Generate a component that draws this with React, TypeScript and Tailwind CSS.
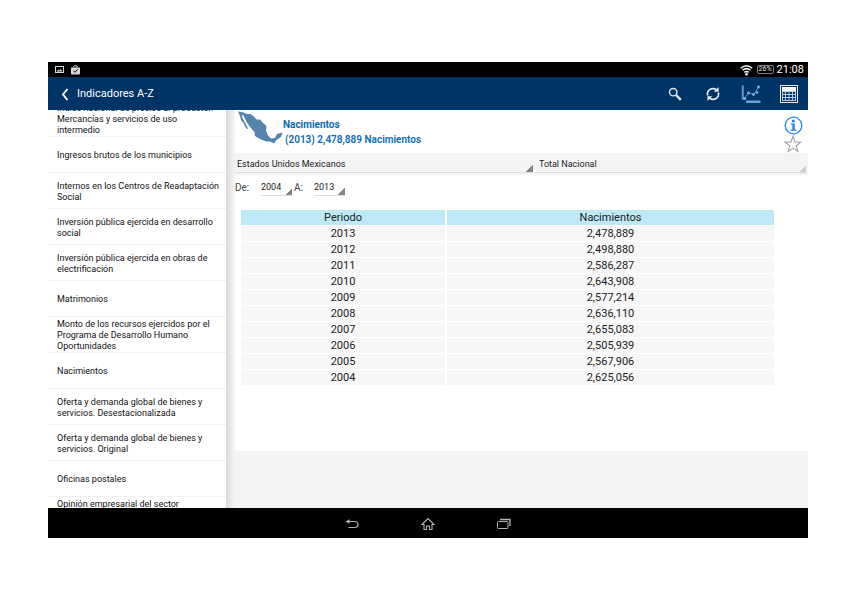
import type { ReactNode } from 'react';

const indicators = [
  'Índice nacional de precios al productor. Mercancías y servicios de uso intermedio',
  'Ingresos brutos de los municipios',
  'Internos en los Centros de Readaptación Social',
  'Inversión pública ejercida en desarrollo social',
  'Inversión pública ejercida en obras de electrificación',
  'Matrimonios',
  'Monto de los recursos ejercidos por el Programa de Desarrollo Humano Oportunidades',
  'Nacimientos',
  'Oferta y demanda global de bienes y servicios. Desestacionalizada',
  'Oferta y demanda global de bienes y servicios. Original',
  'Oficinas postales',
  'Opinión empresarial del sector manufacturero. Indicador agregado de tendencia',
];

const births: [string, string][] = [
  ['2013', '2,478,889'],
  ['2012', '2,498,880'],
  ['2011', '2,586,287'],
  ['2010', '2,643,908'],
  ['2009', '2,577,214'],
  ['2008', '2,636,110'],
  ['2007', '2,655,083'],
  ['2006', '2,505,939'],
  ['2005', '2,567,906'],
  ['2004', '2,625,056'],
];

const years = births.map(([year]) => year);

function StatusBar() {
  return (
    <div className="flex h-[15px] shrink-0 items-center bg-black px-1 text-[#d8d8d8]">
      <svg className="ml-[3px] h-[9px] w-[9px]" viewBox="0 0 9 9" aria-hidden="true">
        <rect x="0.5" y="1.5" width="8" height="6" fill="none" stroke="currentColor" />
        <path d="M1.500 6.500L3 4.600L4.300 5.600L5.800 4L7.500 6.500Z" fill="currentColor" />
      </svg>
      <svg className="ml-[7px] h-[10px] w-[9px]" viewBox="0 0 9 10" aria-hidden="true">
        <path d="M0 2.5h9v6q0 1-1 1H1q-1 0-1-1z" fill="currentColor" />
        <path d="M2.8 2.5V1.6q0-.8.8-.8h1.8q.8 0 .8.8v.9" fill="none" stroke="currentColor" />
        <path d="M2.5 5.8l1.5 1.5 2.8-3" fill="none" stroke="#000" />
      </svg>
      <span className="flex-1" />
      <svg className="h-[12px] w-[13px]" viewBox="0 0 13 12" aria-hidden="true">
        <g fill="none" stroke="#fff" strokeWidth="1.5">
          <path d="M0.8 4.2Q6.500-0.600 12.200 4.2" />
          <path d="M2.600 6.300Q6.500 3 10.400 6.300" />
          <path d="M4.400 8.300Q6.500 6.600 8.600 8.300" />
        </g>
        <circle cx="6.500" cy="10.200" r="1.300" fill="#fff" />
      </svg>
      <span className="ml-1 flex h-[9px] w-[17px] items-center justify-center rounded-xs border border-[#7c7c7c] text-[7px] leading-none text-[#e8e8e8]">
        26%
      </span>
      <span className="ml-[3px] text-[11px] leading-none text-white">21:08</span>
    </div>
  );
}

function BarButton({ label, children }: { label: string; children: ReactNode }) {
  return (
    <button type="button" aria-label={label} className="flex h-full w-[38px] items-center justify-center">
      {children}
    </button>
  );
}

function AppBar() {
  return (
    <header className="flex h-[33px] shrink-0 items-center bg-[#003366] text-white">
      <button type="button" className="flex h-full items-center gap-2 pt-[2px] pl-[13px] text-[11px]">
        <svg className="h-[13px] w-[8px]" viewBox="0 0 8 13" aria-hidden="true">
          <path d="M6.500 1L2 6.500L6.500 12" fill="none" stroke="currentColor" strokeWidth="1.900" />
        </svg>
        Indicadores A-Z
      </button>
      <span className="flex-1" />
      <BarButton label="Buscar">
        <svg className="h-[14px] w-[14px]" viewBox="0 0 14 14" aria-hidden="true">
          <circle cx="5.200" cy="5.200" r="3.700" fill="none" stroke="#e4e9ef" strokeWidth="1.400" />
          <path d="M8 8L12.800 12.800" stroke="#e4e9ef" strokeWidth="2.400" />
        </svg>
      </BarButton>
      <BarButton label="Actualizar">
        <svg className="h-[16px] w-[16px]" viewBox="0 0 16 16" aria-hidden="true">
          <g fill="none" stroke="#e4e9ef" strokeWidth="1.700">
            <path d="M2.600 9.500Q1.800 5.500 4.800 3.600Q8.200 1.600 11.400 3.800" />
            <path d="M13.400 6.500Q14.200 10.500 11.200 12.400Q7.800 14.400 4.600 12.200" />
          </g>
          <path d="M13.600 1V5.800H8.800z" fill="#e4e9ef" />
          <path d="M2.400 15V10.200H7.200z" fill="#e4e9ef" />
        </svg>
      </BarButton>
      <BarButton label="Gráfica">
        <svg className="h-[20px] w-[20px]" viewBox="0 0 20 20" aria-hidden="true">
          <path d="M1.800 1.500V15.500" stroke="#5f97cb" strokeWidth="2" />
          <path d="M6 17.800H18.500" stroke="#6ba3d6" strokeWidth="2.400" strokeLinecap="round" />
          <path d="M2.500 15.500L7.500 9L13 10.500L17.500 3" fill="none" stroke="#5f97cb" />
          <g fill="#7fb2de">
            <circle cx="3.600" cy="14.600" r="1.500" />
            <circle cx="7.500" cy="9" r="1.400" />
            <circle cx="12.500" cy="10.500" r="1.400" />
            <circle cx="16" cy="8.500" r="1.300" />
            <circle cx="17.500" cy="3" r="1.400" />
          </g>
        </svg>
      </BarButton>
      <BarButton label="Tabla">
        <svg className="h-[18px] w-[18px]" viewBox="0 0 18 18" aria-hidden="true">
          <rect x="0.500" y="0.500" width="17" height="17" fill="none" stroke="#e6edf4" />
          <rect x="2" y="2" width="14" height="4" fill="#fff" />
          <g fill="none" stroke="#b9c9da">
            <rect x="2.500" y="6.500" width="13" height="9" />
            <path d="M2.500 9.500h13M2.500 12.500h13M5.500 6.500v9M9 6.500v9M12.500 6.500v9" />
          </g>
        </svg>
      </BarButton>
    </header>
  );
}

function Sidebar() {
  return (
    <nav aria-label="Indicadores" className="w-[178px] shrink-0 overflow-hidden bg-white">
      <ul className="-mt-[9px]">
        {indicators.map((name) => (
          <li key={name} className="h-9 border-b border-[#f0f0f0]">
            <a
              href="#"
              className="flex h-full items-center pt-[2px] pr-[5px] pl-[9px] text-[9px] leading-[11px] text-[#111]"
            >
              {name}
            </a>
          </li>
        ))}
      </ul>
    </nav>
  );
}

function IndicatorHeader() {
  return (
    <div className="flex h-[43px] bg-white pl-[2px] font-bold text-[#0a6cb0]">
      <svg className="h-[35px] w-[46px]" viewBox="0 0 46 35" aria-hidden="true">
        <path
          d="M1 1.500L5 2L10 4H13.500L17 6.500L19.500 9.500L23 9.500L26 13L29.500 16L29 20.500L31 25.500L34 28.500L38 28L40 24L45.500 22.500L44 27L41 29L39 30.500L37 33.500L33 31.500L29 31.500L23 29L18 26L17.500 22L13 17L9 11L6.500 5.500L4.500 5L6 9L9 14.500L11.500 19.500L9 18L6.500 13L4 10L3 6z"
          fill="#5583aa"
        />
      </svg>
      <h1 className="flex-1 pt-[7px] text-[10px] leading-[15px]">
        <span className="block">Nacimientos</span>
        <span className="block pl-[2px] font-semibold">(2013) 2,478,889 Nacimientos</span>
      </h1>
      <div className="flex w-[30px] flex-col items-center pt-[6px]">
        <button type="button" aria-label="Información">
          <svg className="h-[19px] w-[19px]" viewBox="0 0 19 19" aria-hidden="true">
            <circle cx="9.500" cy="9.500" r="8.300" fill="none" stroke="#1e86ee" strokeWidth="1.300" />
            <circle cx="9.300" cy="5" r="1.600" fill="#1e86ee" />
            <path d="M6.800 7.500h4v6h1.500v1.300H6.800v-1.300h1.500v-4.700H6.800z" fill="#1e86ee" />
          </svg>
        </button>
        <button type="button" aria-label="Favorito">
          <svg className="h-[18px] w-[18px]" viewBox="0 0 18 18" aria-hidden="true">
            <path
              d="M9 1.200L11 6.900L17 7.100L12.200 10.700L13.900 16.500L9 13.100L4.100 16.500L5.800 10.700L1 7.100L7 6.900z"
              fill="#fff"
              stroke="#a4a4a4"
              strokeWidth="1.100"
            />
          </svg>
        </button>
      </div>
    </div>
  );
}

const selectBase =
  'appearance-none border-b border-[#dcdcdc] bg-[length:7px_7px] bg-right-bottom bg-no-repeat text-[9px] leading-[11px] text-[#222]';
const darkCorner = 'bg-[linear-gradient(135deg,transparent_50%,#858585_50%)]';
const lightCorner = 'bg-[linear-gradient(135deg,transparent_50%,#cfcfcf_50%)]';

function Filters() {
  return (
    <>
      <div className="flex h-[22px] gap-[2px] bg-[#f4f4f4] pb-[2px]">
        <select aria-label="Entidad" className={`${selectBase} ${darkCorner} w-[52%] pt-[3px] pl-[2px]`}>
          <option>Estados Unidos Mexicanos</option>
        </select>
        <select aria-label="Cobertura" className={`${selectBase} ${lightCorner} mr-[2px] flex-1 pt-[3px] pl-[4px]`}>
          <option>Total Nacional</option>
        </select>
      </div>
      <div className="flex h-[34px] items-start bg-white pt-1 text-[10px] leading-[17px] text-[#444]">
        <label htmlFor="from" className="w-[26px]">
          De:
        </label>
        <select id="from" defaultValue="2004" className={`${selectBase} ${darkCorner} h-[17px] w-[31px]`}>
          {years.map((y) => (
            <option key={y}>{y}</option>
          ))}
        </select>
        <label htmlFor="to" className="w-[22px] pl-[2px]">
          A:
        </label>
        <select id="to" defaultValue="2013" className={`${selectBase} ${darkCorner} h-[17px] w-[31px]`}>
          {years.map((y) => (
            <option key={y}>{y}</option>
          ))}
        </select>
      </div>
    </>
  );
}

function BirthsTable() {
  return (
    <div className="bg-white pr-8 pb-[65px] pl-1">
      <table className="w-full table-fixed border-separate border-spacing-x-[2px] border-spacing-y-px text-center text-[11px] leading-[15px] text-[#222]">
        <thead>
          <tr className="bg-[#bde8f6]">
            <th scope="col" className="w-[204px] p-0 font-normal">
              Periodo
            </th>
            <th scope="col" className="p-0 font-normal">
              Nacimientos
            </th>
          </tr>
        </thead>
        <tbody>
          {births.map(([year, total]) => (
            <tr key={year} className="bg-[#f6f6f6]">
              <td className="p-0">{year}</td>
              <td className="p-0">{total}</td>
            </tr>
          ))}
        </tbody>
      </table>
    </div>
  );
}

function NavBar() {
  return (
    <div className="flex h-[30px] shrink-0 items-center justify-center gap-[60px] bg-black pt-[2px] text-[#b4b4b4]">
      <button type="button" aria-label="Atrás">
        <svg className="h-[14px] w-[16px]" viewBox="0 0 16 14" aria-hidden="true">
          <path d="M4 4.500H10.500Q14 4.500 14 7.500T10.500 10.500H4.500" fill="none" stroke="currentColor" strokeWidth="1.200" />
          <path d="M1.500 4.500L5.500 2.300V6.700z" fill="currentColor" />
        </svg>
      </button>
      <button type="button" aria-label="Inicio">
        <svg className="h-[14px] w-[16px]" viewBox="0 0 16 14" aria-hidden="true">
          <path
            d="M2 7.500L8 1.500L14 7.500H12V12.500H9.500V9H6.500V12.500H4V7.500z"
            fill="none"
            stroke="currentColor"
            strokeWidth="1.100"
          />
        </svg>
      </button>
      <button type="button" aria-label="Recientes">
        <svg className="h-[14px] w-[16px]" viewBox="0 0 16 14" aria-hidden="true">
          <rect x="1.500" y="4.500" width="10.500" height="7" rx="1" fill="none" stroke="currentColor" />
          <path d="M4 2.500H14V9" fill="none" stroke="currentColor" strokeWidth="1.300" />
        </svg>
      </button>
    </div>
  );
}

export default function App() {
  return (
    <div className="flex h-screen flex-col bg-white px-12 py-[62px] font-[Roboto,sans-serif]">
      <div className="flex min-h-0 flex-1 flex-col overflow-hidden">
        <StatusBar />
        <AppBar />
        <div className="flex min-h-0 flex-1 bg-[#f4f4f4]">
          <Sidebar />
          <div className="w-[9px] shrink-0 bg-linear-to-r from-[#dadada] to-[#f6f6f6]" />
          <main className="min-w-0 flex-1 overflow-hidden">
            <IndicatorHeader />
            <Filters />
            <BirthsTable />
          </main>
        </div>
        <NavBar />
      </div>
    </div>
  );
}
